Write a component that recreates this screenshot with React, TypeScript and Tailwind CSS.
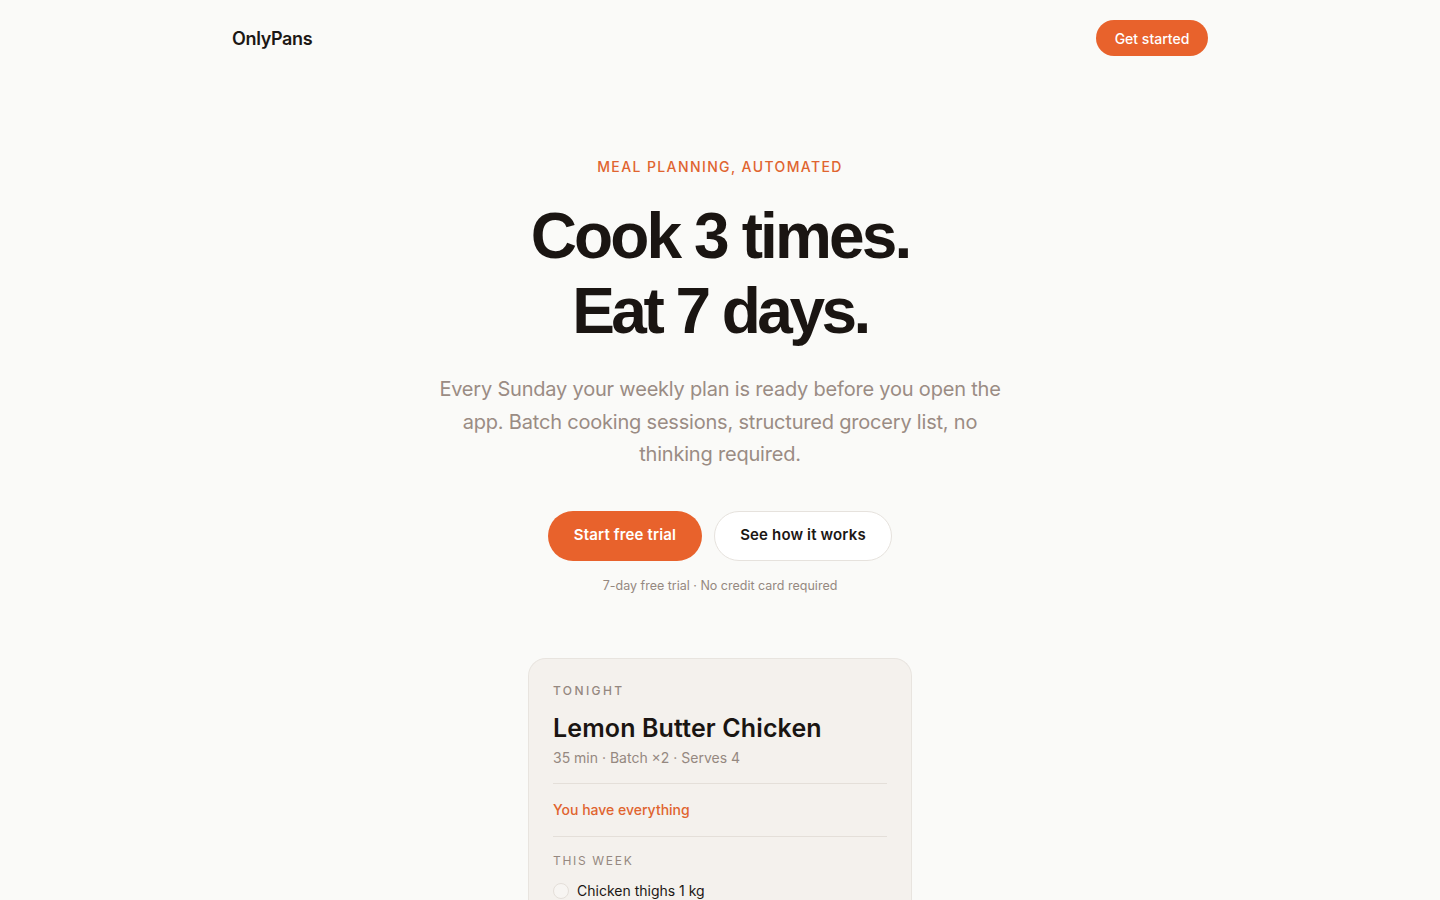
const body = { fontFamily: 'Inter, "Liberation Sans", Arial, sans-serif' };
const display = { fontFamily: '"Liberation Sans", Arial, sans-serif' };

const groceries = ["Chicken thighs 1 kg"];

const App = () => {
    return (
        <div style={body} className="min-h-screen bg-[#fafaf8] text-[#1c1714]">
            <header className="mx-auto flex h-[76px] w-[976px] items-center justify-between">
                <span className="text-[18px] font-semibold tracking-[-0.02em]">OnlyPans</span>
                <button className="h-9 w-[112px] rounded-full bg-[#e8622c] text-[14px] font-medium text-white">
                    Get started
                </button>
            </header>

            <main className="flex flex-col items-center pt-[80px]">
                <p className="text-[14px] font-medium tracking-[0.1em] text-[#e0642f]">MEAL PLANNING, AUTOMATED</p>

                <h1 style={display} className="mt-[22px] text-center text-[64px] font-bold leading-[75px] tracking-[-0.045em] text-[#1a1512]">
                    Cook 3 times.
                    <br />
                    <span className="tracking-[-0.055em]">Eat 7 days.</span>
                </h1>

                <p className="mt-[24px] w-[580px] text-center text-[20px] leading-[32.5px] tracking-[-0.01em] text-[#9a8c84]">
                    Every Sunday your weekly plan is ready before you open the app. Batch cooking sessions, structured grocery list, no thinking required.
                </p>

                <div className="mt-[40px] flex gap-3">
                    <button className="h-[50px] w-[154px] rounded-full bg-[#e8622c] text-[15px] font-semibold tracking-[0.01em] text-white">
                        Start free trial
                    </button>
                    <button className="h-[50px] w-[178px] rounded-full border border-[#e6e2dd] bg-white text-[15px] font-semibold tracking-[0.01em] text-[#1c1714]">
                        See how it works
                    </button>
                </div>

                <p className="mt-[16px] text-[12.5px] text-[#958880]">7-day free trial · No credit card required</p>

                <div className="mt-[63px] w-[384px] rounded-t-[18px] border border-b-0 border-[#e8e4df] bg-[#f4f1ed] px-6 pt-6 pb-4">
                    <p className="text-[12px] leading-4 font-medium tracking-[0.2em] text-[#958880]">TONIGHT</p>
                    <h2 className="mt-[13px] text-[25px] leading-8 font-semibold tracking-[0.005em] text-[#1a1512]">Lemon Butter Chicken</h2>
                    <p className="mt-[3px] text-[14px] text-[#958880]">35 min · Batch ×2 · Serves 4</p>

                    <div className="mt-[15px] border-t border-[#e4dfd9] pt-[15px] pb-[16px]">
                        <p className="text-[14px] font-medium text-[#e0642f]">You have everything</p>
                    </div>

                    <div className="border-t border-[#e4dfd9] pt-[16px]">
                        <p className="text-[12px] leading-4 tracking-[0.14em] text-[#958880]">THIS WEEK</p>
                        <ul className="mt-[11px] flex flex-col gap-3">
                            {groceries.map((item) => (
                                <li key={item} className="flex items-center gap-2">
                                    <span className="h-4 w-4 rounded-full border border-[#e4dfd9] bg-[#f7f5f2]" />
                                    <span className="text-[14px] text-[#1c1714]">{item}</span>
                                </li>
                            ))}
                        </ul>
                    </div>
                </div>
            </main>
        </div>
    );
};

export default App;
